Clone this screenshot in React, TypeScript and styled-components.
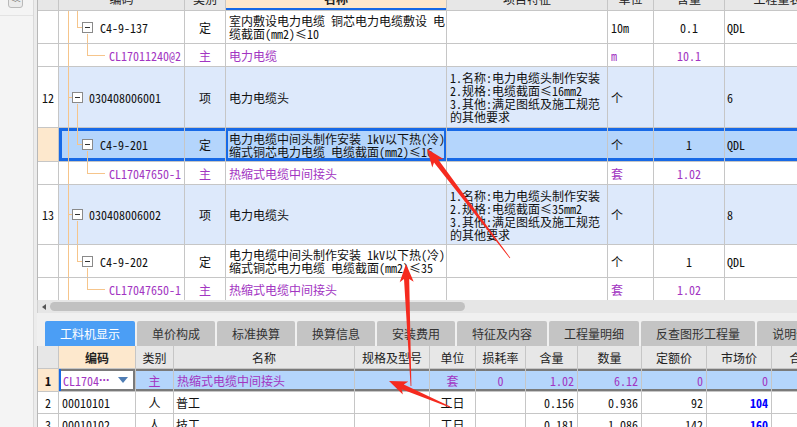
import React from "react";
import styled, { createGlobalStyle } from "styled-components";

const MONO = `"Noto Sans Mono CJK SC", "Noto Sans CJK SC", "Liberation Mono", monospace`;
const SANS = `"Noto Sans CJK SC", "Noto Sans", sans-serif`;
const GRID = "#c6c6c6";
const BLUE = "#1769e6";
const PURPLE = "#a235c2";
const TREE = "#f6c58b";

const TOP_COLS = "21px 126px 41px 221px 161px 46px 71px 130px";
const BOTTOM_COLS = "21px 77px 38px 181px 75px 46px 50px 52px 64px 65px 65px 60px";

const GlobalStyle = createGlobalStyle`
  html, body {
    margin: 0;
    padding: 0;
  }
  body {
    width: 797px;
    height: 427px;
    overflow: hidden;
    background: #ececec;
    font-family: ${MONO};
  }
  #root {
    width: 797px;
    height: 427px;
  }
`;

type Align = "left" | "center" | "right";
type Tone = "white" | "head" | "peach" | "band" | "sel";

const toneBg: Record<Tone, string> = {
  white: "#ffffff",
  head: "#e7e7e7",
  peach: "#fde8cd",
  band: "#dde9fb",
  sel: "#b4d5fc",
};

const Page = styled.div`
  position: relative;
  display: flex;
  width: 797px;
  height: 427px;
  overflow: hidden;
`;

const Sidebar = styled.div`
  width: 37px;
  flex: none;
  display: flex;
  overflow: hidden;
`;

const SidePanel = styled.div`
  width: 33px;
  background: #f4f4f4;
  border-right: 1px solid #dadada;
`;

const SideHead = styled.div`
  display: flex;
  height: 15px;
  border-bottom: 1px solid #e3e3e3;
`;

const SideToggle = styled.div`
  box-sizing: border-box;
  width: 15px;
  height: 16px;
  margin: -8px 0 0 8px;
  border: 1px solid #b9b9b9;
  border-radius: 3px;
  background: #ebebeb;
  color: #7a7a7a;
  font: 9px/14px ${SANS};
  letter-spacing: -1px;
  text-align: center;
`;

const Main = styled.div`
  flex: 1;
  min-width: 0;
  display: flex;
  flex-direction: column;
  overflow: hidden;
`;

const TopViewport = styled.div`
  height: 300px;
  flex: none;
  overflow: hidden;
  background: #fff;
  border-left: 1px solid #b8b8b8;
`;

const Scroller = styled.div`
  margin-top: -13px;
`;

const Row = styled.div<{ $cols: string; $h: number }>`
  display: grid;
  grid-template-columns: ${p => p.$cols};
  height: ${p => p.$h}px;
`;

const Cell = styled.div<{
  $align?: Align;
  $tone?: Tone;
  $ink?: string;
  $bold?: boolean;
  $ring?: string;
  $pad?: number;
}>`
  box-sizing: border-box;
  position: relative;
  display: flex;
  align-items: center;
  justify-content: ${p =>
    p.$align === "center" ? "center" : p.$align === "right" ? "flex-end" : "flex-start"};
  padding: 0 ${p => p.$pad ?? 3}px;
  border-right: 1px solid ${GRID};
  border-bottom: 1px solid ${GRID};
  background: ${p => toneBg[p.$tone ?? "white"]};
  color: ${p => p.$ink ?? "#111"};
  font-weight: ${p => (p.$bold ? 700 : 400)};
  box-shadow: ${p => p.$ring ?? "none"};
  font-size: 12px;
  line-height: 13px;
  white-space: nowrap;
  overflow: hidden;
  min-width: 0;
`;

const HeadCell = styled(Cell)`
  font-family: ${SANS};
  color: #222;
  justify-content: center;
`;

const Lines = styled.div`
  display: flex;
  flex-direction: column;
`;

const TreeSvg = styled.svg`
  position: absolute;
  left: 0;
  top: 0;
  pointer-events: none;
`;

const FoldBox = styled.span<{ $gap: number }>`
  box-sizing: border-box;
  position: relative;
  flex: none;
  width: 11px;
  height: 11px;
  margin-right: ${p => p.$gap}px;
  border: 1px solid #8a8a8a;
  background: #fff;
  &::after {
    content: "";
    position: absolute;
    left: 2px;
    right: 2px;
    top: 4px;
    height: 1px;
    background: #333;
  }
`;

const CodeText = styled.span`
  position: relative;
`;

const Ellipsis = styled.span`
  font-family: "Liberation Sans", sans-serif;
  font-weight: 700;
  letter-spacing: -0.5px;
`;

const ScrollBar = styled.div`
  height: 13px;
  flex: none;
  display: flex;
  align-items: center;
  gap: 4px;
  padding-left: 4px;
  background: #e6e6e6;
  border-left: 1px solid #d0d0d0;
`;

const ScrollArrow = styled.span`
  width: 0;
  height: 0;
  border-top: 3px solid transparent;
  border-bottom: 3px solid transparent;
  border-right: 4px solid #555;
`;

const ScrollThumb = styled.span`
  width: 415px;
  height: 9px;
  border-radius: 5px;
  background: #c1c1c1;
`;

const TabBar = styled.div`
  height: 33px;
  flex: none;
  box-sizing: border-box;
  display: flex;
  align-items: flex-end;
  gap: 2px;
  padding-left: 8px;
  background: #f0f0f0;
`;

const Tab = styled.div<{ $active?: boolean }>`
  flex: none;
  height: 25px;
  padding: 0 15px;
  display: flex;
  align-items: center;
  border-radius: 2px 2px 0 0;
  background: ${p => (p.$active ? "#4b9ef5" : "#c4c4c4")};
  color: ${p => (p.$active ? "#fff" : "#333")};
  font: 12px/14px ${SANS};
  white-space: nowrap;
`;

const BottomViewport = styled.div`
  flex: 1;
  overflow: hidden;
  background: #fff;
  border-left: 1px solid #b8b8b8;
`;

const DropTriangle = styled.span`
  margin-left: auto;
  margin-right: 3px;
  width: 0;
  height: 0;
  border-left: 5px solid transparent;
  border-right: 5px solid transparent;
  border-top: 6px solid #4f7db4;
`;

const PriceText = styled.span`
  color: #0000ff;
  font-weight: 700;
`;

const Overlay = styled.svg`
  position: absolute;
  left: 0;
  top: 0;
  pointer-events: none;
`;

interface TopRow {
  h: number;
  num?: string;
  level: 2 | 3 | 4;
  code: string;
  kind: string;
  name: string[];
  feat?: string[];
  unit?: string;
  qty?: string;
  expr?: string;
  tone: Tone;
  mat?: boolean;
}

const feat = (size: string) => [
  "1.名称:电力电缆头制作安装",
  `2.规格:电缆截面≤${size}mm2`,
  "3.其他:满足图纸及施工规范",
  "的其他要求",
];

const topRows: TopRow[] = [
  {
    h: 33, level: 3, code: "C4-9-137", kind: "定",
    name: ["室内敷设电力电缆 铜芯电力电缆敷设 电", "缆截面(mm2)≤10"],
    unit: "10m", qty: "0.1", expr: "QDL", tone: "white",
  },
  {
    h: 23, level: 4, code: "CL17011240@2", kind: "主", name: ["电力电缆"],
    unit: "m", qty: "10.1", tone: "white", mat: true,
  },
  {
    h: 61, num: "12", level: 2, code: "030408006001", kind: "项", name: ["电力电缆头"],
    feat: feat("16"), unit: "个", expr: "6", tone: "band",
  },
  {
    h: 34, level: 3, code: "C4-9-201", kind: "定",
    name: ["电力电缆中间头制作安装 1kV以下热(冷)", "缩式铜芯电力电缆 电缆截面(mm2)≤16"],
    unit: "个", qty: "1", expr: "QDL", tone: "sel",
  },
  {
    h: 23, level: 4, code: "CL17047650-1", kind: "主", name: ["热缩式电缆中间接头"],
    unit: "套", qty: "1.02", tone: "white", mat: true,
  },
  {
    h: 60, num: "13", level: 2, code: "030408006002", kind: "项", name: ["电力电缆头"],
    feat: feat("35"), unit: "个", expr: "8", tone: "band",
  },
  {
    h: 33, level: 3, code: "C4-9-202", kind: "定",
    name: ["电力电缆中间头制作安装 1kV以下热(冷)", "缩式铜芯电力电缆 电缆截面(mm2)≤35"],
    unit: "个", qty: "1", expr: "QDL", tone: "white",
  },
  {
    h: 23, level: 4, code: "CL17047650-1", kind: "主", name: ["热缩式电缆中间接头"],
    unit: "套", qty: "1.02", tone: "white", mat: true,
  },
];

const rowRing = `inset 0 3px 0 ${BLUE}, inset 0 -3px 0 ${BLUE}`;
const codeRing = `inset 3px 0 0 ${BLUE}, ${rowRing}`;
const nameRing = `inset 2px 0 0 ${BLUE}, inset -2px 0 0 ${BLUE}, ${rowRing}`;

const TreeLines: React.FC<{ level: 2 | 3 | 4; h: number }> = ({ level, h }) => {
  const inner = h - 1;
  const mid = Math.floor(inner / 2) + 0.5;
  const below = mid + 6;
  return (
    <TreeSvg width={126} height={inner} shapeRendering="crispEdges">
      <g stroke={TREE} strokeWidth={1}>
        <line x1={9.5} y1={0} x2={9.5} y2={inner} />
        {level === 2 && (
          <>
            <line x1={9.5} y1={mid} x2={13} y2={mid} />
            <line x1={18.5} y1={below} x2={18.5} y2={inner} />
          </>
        )}
        {level === 3 && (
          <>
            <line x1={18.5} y1={0} x2={18.5} y2={mid} />
            <line x1={18.5} y1={mid} x2={23} y2={mid} />
            <line x1={28.5} y1={below} x2={28.5} y2={inner} />
          </>
        )}
        {level === 4 && (
          <>
            <line x1={28.5} y1={0} x2={28.5} y2={mid} />
            <line x1={28.5} y1={mid} x2={46} y2={mid} />
          </>
        )}
      </g>
    </TreeSvg>
  );
};

const indentFor = { 2: 13, 3: 23, 4: 50 } as const;

const TopGridRow: React.FC<{ row: TopRow }> = ({ row }) => {
  const sel = row.tone === "sel";
  const ink = row.mat ? PURPLE : "#111";
  return (
    <Row $cols={TOP_COLS} $h={row.h}>
      <Cell $align="center" $tone={sel ? "peach" : "white"}>{row.num}</Cell>
      <Cell $tone={row.tone} $pad={indentFor[row.level]} $ink={ink} $ring={sel ? codeRing : undefined}>
        <TreeLines level={row.level} h={row.h} />
        {row.level !== 4 && <FoldBox $gap={row.level === 2 ? 6 : 7} />}
        <CodeText>{row.code}</CodeText>
      </Cell>
      <Cell $align="center" $tone={row.tone} $ink={ink} $ring={sel ? rowRing : undefined}>{row.kind}</Cell>
      <Cell $tone={row.tone} $ink={ink} $ring={sel ? nameRing : undefined}>
        <Lines>
          {row.name.map(l => <span key={l}>{l}</span>)}
        </Lines>
      </Cell>
      <Cell $tone={row.tone} $ring={sel ? rowRing : undefined}>
        <Lines>
          {(row.feat ?? []).map(l => <span key={l}>{l}</span>)}
        </Lines>
      </Cell>
      <Cell $tone={row.tone} $ink={ink} $ring={sel ? rowRing : undefined}>{row.unit}</Cell>
      <Cell $align="center" $tone={row.tone} $ink={ink} $ring={sel ? rowRing : undefined}>{row.qty}</Cell>
      <Cell $pad={2} $tone={row.tone} $ring={sel ? rowRing : undefined}>{row.expr}</Cell>
    </Row>
  );
};

const tabs = ["工料机显示", "单价构成", "标准换算", "换算信息", "安装费用", "特征及内容", "工程量明细", "反查图形工程量", "说明信息"];

const bottomHead = ["", "编码", "类别", "名称", "规格及型号", "单位", "损耗率", "含量", "数量", "定额价", "市场价", "合价"];

interface Labour {
  num: string;
  code: string;
  kind: string;
  name: string;
  unit: string;
  qty: string;
  total: string;
  base: string;
  market: string;
}

const labour: Labour[] = [
  { num: "2", code: "00010101", kind: "人", name: "普工", unit: "工日", qty: "0.156", total: "0.936", base: "92", market: "104" },
  { num: "3", code: "00010102", kind: "人", name: "技工", unit: "工日", qty: "0.181", total: "1.086", base: "142", market: "160" },
];

const grayRing = "inset 0 2px 0 #7a7a7a, inset 0 -2px 0 #7a7a7a";
const editRing = `inset 2px 0 0 ${BLUE}, inset -2px 0 0 #7a7a7a, ${grayRing}`;

const arrowPoints = (x1: number, y1: number, x2: number, y2: number) => {
  const dx = x2 - x1;
  const dy = y2 - y1;
  const len = Math.hypot(dx, dy);
  const ux = dx / len;
  const uy = dy / len;
  const nx = -uy;
  const ny = ux;
  const headL = 15;
  const sweep = 3;
  const headW = 7;
  const neck = 2.6;
  const tail = 0.4;
  const bx = x2 - ux * headL;
  const by = y2 - uy * headL;
  const wx = x2 - ux * (headL + sweep);
  const wy = y2 - uy * (headL + sweep);
  const pts = [
    [x1 + nx * tail, y1 + ny * tail],
    [bx + nx * neck, by + ny * neck],
    [wx + nx * headW, wy + ny * headW],
    [x2, y2],
    [wx - nx * headW, wy - ny * headW],
    [bx - nx * neck, by - ny * neck],
    [x1 - nx * tail, y1 - ny * tail],
  ];
  return pts.map(p => `${p[0].toFixed(1)},${p[1].toFixed(1)}`).join(" ");
};

const arrows = [
  [510, 258, 427, 149],
  [411, 386, 406, 264],
  [450, 407, 389, 381],
];

export default function App() {
  return (
    <>
      <GlobalStyle />
      <Page>
        <Sidebar>
          <SidePanel>
            <SideHead>
              <SideToggle>&lt;&lt;</SideToggle>
            </SideHead>
          </SidePanel>
        </Sidebar>
        <Main>
          <TopViewport>
            <Scroller>
              <Row $cols={TOP_COLS} $h={24}>
                <HeadCell $tone="head" />
                <HeadCell $tone="head">编码</HeadCell>
                <HeadCell $tone="head">类别</HeadCell>
                <HeadCell $tone="peach" $bold $ring={`inset 0 -2px 0 ${BLUE}`}>名称</HeadCell>
                <HeadCell $tone="head">项目特征</HeadCell>
                <HeadCell $tone="head">单位</HeadCell>
                <HeadCell $tone="head">含量</HeadCell>
                <HeadCell $tone="head">工程量表达式</HeadCell>
              </Row>
              {topRows.map((r, i) => <TopGridRow key={i} row={r} />)}
            </Scroller>
          </TopViewport>
          <ScrollBar>
            <ScrollArrow />
            <ScrollThumb />
          </ScrollBar>
          <TabBar>
            {tabs.map((t, i) => <Tab key={t} $active={i === 0}>{t}</Tab>)}
          </TabBar>
          <BottomViewport>
            <Row $cols={BOTTOM_COLS} $h={23}>
              {bottomHead.map((h, i) => (
                <HeadCell key={i} $tone={i === 1 ? "peach" : "head"} $bold={i === 1}>{h}</HeadCell>
              ))}
            </Row>
            <Row $cols={BOTTOM_COLS} $h={23}>
              <Cell $align="center" $tone="peach" $bold>1</Cell>
              <Cell $tone="white" $ink={PURPLE} $ring={editRing} $pad={4}>
                CL1704<Ellipsis>···</Ellipsis>
                <DropTriangle />
              </Cell>
              <Cell $align="center" $tone="sel" $ink={PURPLE} $ring={grayRing}>主</Cell>
              <Cell $tone="sel" $ink={PURPLE} $ring={grayRing}>热缩式电缆中间接头</Cell>
              <Cell $tone="sel" $ring={grayRing} />
              <Cell $align="center" $tone="sel" $ink={PURPLE} $ring={grayRing}>套</Cell>
              <Cell $align="center" $tone="sel" $ink={PURPLE} $ring={grayRing}>0</Cell>
              <Cell $align="right" $tone="sel" $ink={PURPLE} $ring={grayRing}>1.02</Cell>
              <Cell $align="right" $tone="sel" $ink={PURPLE} $ring={grayRing}>6.12</Cell>
              <Cell $align="right" $tone="sel" $ink={PURPLE} $ring={grayRing}>0</Cell>
              <Cell $align="right" $tone="sel" $ink={PURPLE} $ring={grayRing}>0</Cell>
              <Cell $tone="sel" $ring={grayRing} />
            </Row>
            {labour.map(l => (
              <Row key={l.num} $cols={BOTTOM_COLS} $h={22}>
                <Cell $align="center">{l.num}</Cell>
                <Cell>{l.code}</Cell>
                <Cell $align="center">{l.kind}</Cell>
                <Cell $pad={2}>{l.name}</Cell>
                <Cell />
                <Cell $align="center">{l.unit}</Cell>
                <Cell />
                <Cell $align="right">{l.qty}</Cell>
                <Cell $align="right">{l.total}</Cell>
                <Cell $align="right">{l.base}</Cell>
                <Cell $align="right"><PriceText>{l.market}</PriceText></Cell>
                <Cell />
              </Row>
            ))}
          </BottomViewport>
        </Main>
        <Overlay width={797} height={427}>
          {arrows.map((a, i) => (
            <polygon key={i} points={arrowPoints(a[0], a[1], a[2], a[3])} fill="#f52a1f" />
          ))}
        </Overlay>
      </Page>
    </>
  );
}
